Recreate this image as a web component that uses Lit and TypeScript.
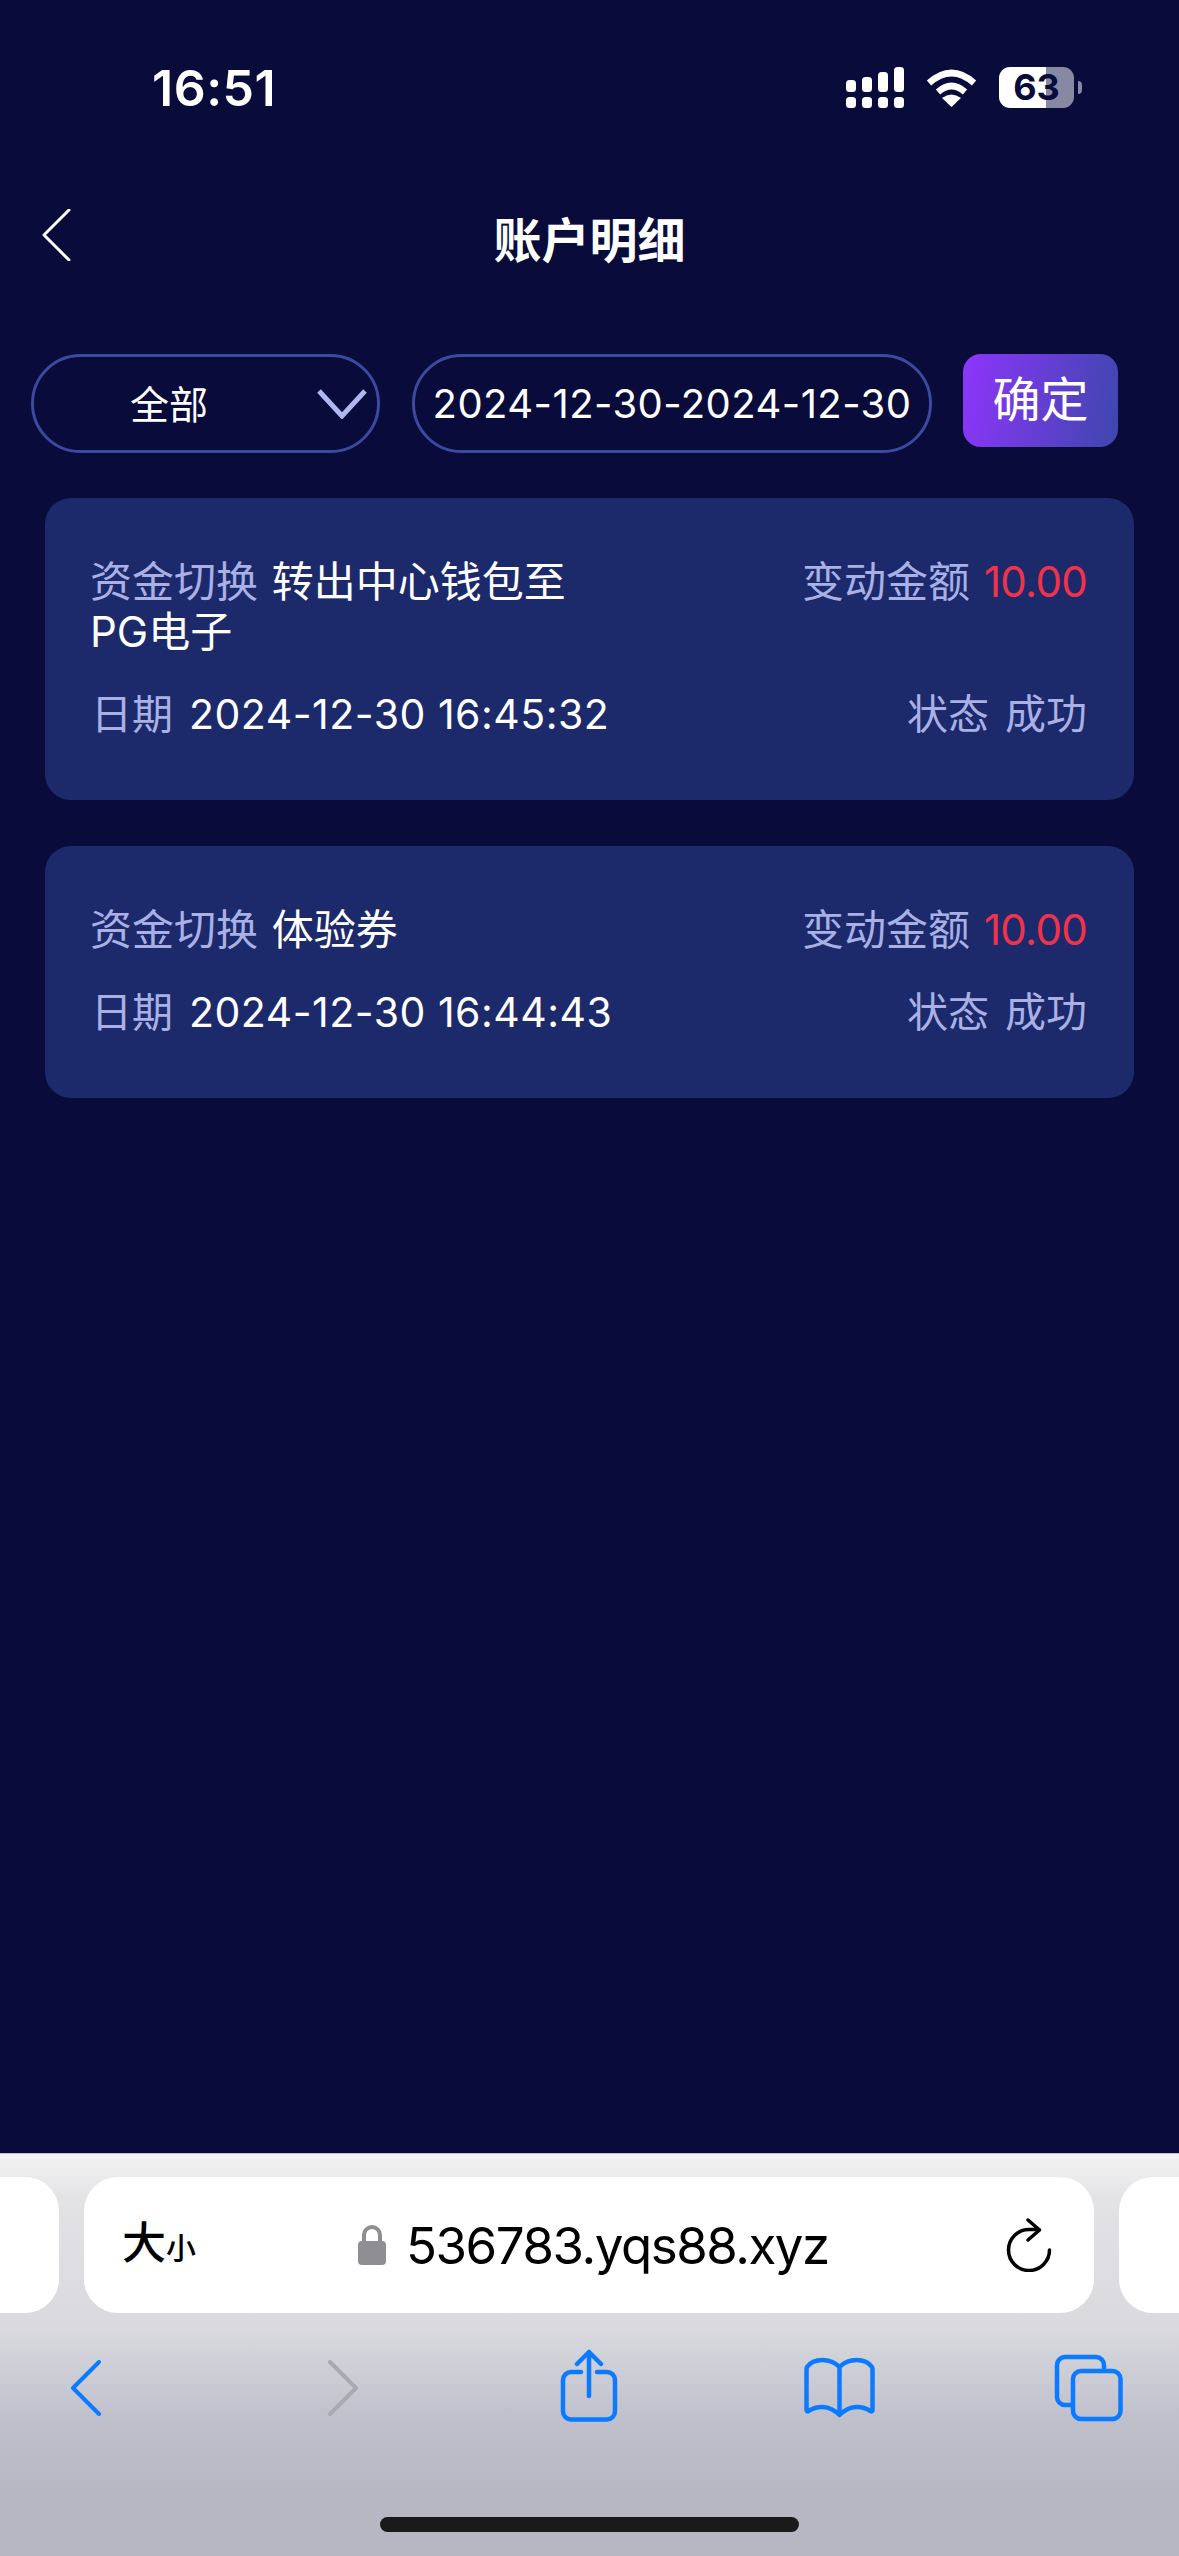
import { LitElement, html, css, svg } from "lit";
import { customElement } from "lit/decorators.js";

const records = [
  { title: "转出中心钱包至PG电子", date: "2024-12-30 16:45:32" },
  { title: "体验券", date: "2024-12-30 16:44:43" },
];

const backIcon = (color: string, w = 2.5) => svg`<path d="M27 1 2 26l25 25" fill="none" stroke=${color} stroke-width=${w} stroke-linecap="round" stroke-linejoin="round" />`;

@customElement("app-root")
export class AppRoot extends LitElement {
  static styles = css`
    :host {
      display: block;
      width: 1179px;
      height: 2556px;
      font-family: Inter, "Noto Sans CJK SC", sans-serif;
    }
    .page {
      display: flex;
      flex-direction: column;
      height: 2556px;
      background: #090b3b;
      color: #fff;
      overflow: hidden;
    }
    .status {
      display: flex;
      align-items: center;
      height: 67px;
      margin-top: 54px;
      padding: 0 105px 0 152px;
      justify-content: space-between;
    }
    .time {
      font-size: 50px;
      font-weight: 600;
      letter-spacing: 0.5px;
    }
    .status-icons {
      display: flex;
      align-items: center;
      gap: 22px;
    }
    .battery {
      position: relative;
      width: 75px;
      height: 41px;
      border-radius: 11px;
      background: linear-gradient(90deg, #fff 63%, #8789a3 63%);
      color: #090b3b;
      font-size: 36px;
      font-weight: 700;
      line-height: 41px;
      text-align: center;
    }
    .battery::after {
      content: "";
      position: absolute;
      right: -8px;
      top: 14px;
      width: 4px;
      height: 13px;
      border-radius: 0 6px 6px 0;
      background: #8789a3;
    }
    .nav {
      position: relative;
      display: flex;
      justify-content: center;
      align-items: center;
      height: 62px;
      margin-top: 88px;
    }
    .nav svg {
      position: absolute;
      left: 42px;
      top: 0;
    }
    .title {
      margin-top: 2px;
      font-size: 48px;
      font-weight: 700;
      line-height: 62px;
    }
    .filters {
      display: flex;
      align-items: flex-start;
      gap: 32px;
      margin: 83px 0 0 31px;
    }
    .pill {
      display: flex;
      align-items: center;
      box-sizing: border-box;
      height: 99px;
      border: 3px solid #3a4a9f;
      border-radius: 50px;
      font-size: 40px;
    }
    .select {
      position: relative;
      width: 349px;
      padding: 0 0 4px 96px;
      font-size: 39px;
    }
    .select svg {
      position: absolute;
      right: 10px;
      top: 32px;
    }
    .range {
      width: 520px;
      justify-content: center;
      white-space: nowrap;
      letter-spacing: 0.45px;
    }
    .ok {
      width: 155px;
      height: 93px;
      margin-left: -1px;
      border-radius: 18px;
      background: linear-gradient(100deg, #8e35fb, #3d47ad);
      font-size: 48px;
      line-height: 92px;
      text-align: center;
    }
    .list {
      display: flex;
      flex-direction: column;
      gap: 46px;
      margin: 45px 45px 0;
    }
    .card {
      padding: 59px 47px 61px 45px;
      border-radius: 26px;
      background: #1c2a6b;
      font-size: 42px;
      line-height: 50px;
      color: #a9b0e6;
    }
    .row {
      display: flex;
      justify-content: space-between;
      align-items: flex-start;
    }
    .row + .row {
      margin-top: 32px;
      padding-left: 1px;
      font-size: 41px;
    }
    .left {
      width: 490px;
    }
    .name {
      margin-left: 2px;
      color: #fff;
    }
    .pair {
      display: flex;
      gap: 16px;
    }
    .value {
      color: #fff;
      letter-spacing: 0.5px;
    }
    .red {
      color: #f0334a;
      letter-spacing: -0.7px;
      margin-left: -2px;
    }
    .chrome {
      position: relative;
      margin-top: auto;
      height: 403px;
      border-top: 1px solid #c4c4cc;
      box-sizing: border-box;
      background: linear-gradient(180deg, #f3f3f3 0, #e3e3e6 45px, #d9d9de 175px, #bfc0cc 265px, #b7b7c3 340px);
      color: #000;
    }
    .tabs {
      display: flex;
      gap: 25px;
      padding-top: 23px;
      margin-left: -951px;
    }
    .tab {
      flex: none;
      display: flex;
      align-items: center;
      width: 1010px;
      height: 136px;
      box-sizing: border-box;
      padding: 0 42px 0 38px;
      border-radius: 34px;
      background: #fff;
    }
    .size {
      width: 236px;
      font-weight: 500;
      font-size: 44px;
      line-height: 50px;
    }
    .size small {
      font-size: 30px;
    }
    .url {
      display: flex;
      align-items: center;
      gap: 20px;
      flex: 1;
      font-size: 51px;
      letter-spacing: -1.45px;
      white-space: nowrap;
    }
    .tools {
      display: flex;
      position: relative;
      height: 72px;
      margin-top: 36px;
    }
    .tools svg {
      position: absolute;
      top: 0;
    }
    .home {
      position: absolute;
      left: 380px;
      bottom: 24px;
      width: 419px;
      height: 15px;
      border-radius: 8px;
      background: #1a1a1a;
    }
  `;

  renderCard(r: { title: string; date: string }) {
    return html`<div class="card">
      <div class="row">
        <div class="left">资金切换 <span class="name">${r.title}</span></div>
        <div class="pair"><span>变动金额</span><span class="red">10.00</span></div>
      </div>
      <div class="row">
        <div class="pair"><span>日期</span><span class="value">${r.date}</span></div>
        <div class="pair"><span>状态</span><span>成功</span></div>
      </div>
    </div>`;
  }

  render() {
    return html`<div class="page">
      <div class="status">
        <div class="time">16:51</div>
        <div class="status-icons">
          <svg width="58" height="41" viewBox="0 0 58 41" fill="#fff">
            <rect x="0" y="13" width="10" height="12" rx="3.5" />
            <rect x="16" y="10" width="10" height="15" rx="3.5" />
            <rect x="32" y="5" width="10" height="20" rx="3.5" />
            <rect x="48" y="0" width="10" height="25" rx="3.5" />
            <rect x="0" y="30" width="10" height="11" rx="3.5" />
            <rect x="16" y="30" width="10" height="11" rx="3.5" />
            <rect x="32" y="30" width="10" height="11" rx="3.5" />
            <rect x="48" y="30" width="10" height="11" rx="3.5" />
          </svg>
          <svg width="51" height="38" viewBox="0 0 51 38">
            <path d="M3 14Q25.5-6 48 14M12 23Q25.5 11 39 23" fill="none" stroke="#fff" stroke-width="6.5" />
            <path d="M16 29Q25.500 22 35 29L25.500 38Z" fill="#fff" />
          </svg>
          <div class="battery">63</div>
        </div>
      </div>

      <div class="nav">
        <svg width="30" height="52" viewBox="0 0 30 52">${backIcon("#fff", 3)}</svg>
        <div class="title">账户明细</div>
      </div>

      <div class="filters">
        <div class="pill select">
          全部
          <svg width="50" height="30" viewBox="0 0 50 30">
            <path d="M2 2 25 27 48 2" fill="none" stroke="#b0b7ee" stroke-width="5" />
          </svg>
        </div>
        <div class="pill range">2024-12-30-2024-12-30</div>
        <div class="ok">确定</div>
      </div>

      <div class="list">${records.map((r) => this.renderCard(r))}</div>

      <div class="chrome">
        <div class="tabs">
          <div class="tab"></div>
          <div class="tab">
            <div class="size">大<small>小</small></div>
            <div class="url">
              <svg width="28" height="40" viewBox="0 0 28 40">
                <path d="M6 18V10a8 8 0 0 1 16 0v8" fill="none" stroke="#8e8e93" stroke-width="4" />
                <rect x="0" y="16" width="28" height="24" rx="4" fill="#8e8e93" />
              </svg>
              536783.yqs88.xyz
            </div>
            <svg width="46" height="54" viewBox="0 0 46 54" fill="none" stroke="#000" stroke-width="3.500" stroke-linecap="round" stroke-linejoin="round">
              <path d="M43.500 32A20.500 20.500 0 1 1 23 11.500H33" />
              <path d="M22 2 33.500 12 22 22" />
            </svg>
          </div>
          <div class="tab"></div>
        </div>
        <div class="tools">
          <svg style="left:70px;top:11px" width="32" height="56" viewBox="0 0 32 56">
            <path d="M29 2 3 28l26 26" fill="none" stroke="#0a7aff" stroke-width="4" stroke-linecap="round" stroke-linejoin="round" />
          </svg>
          <svg style="left:327px;top:11px" width="32" height="56" viewBox="0 0 32 56">
            <path d="M3 2l26 26L3 54" fill="none" stroke="#a9a9b0" stroke-width="4" stroke-linecap="round" stroke-linejoin="round" />
          </svg>
          <svg style="left:559px;top:0" width="60" height="74" viewBox="0 0 60 74" fill="none" stroke="#0a7aff" stroke-width="4.500" stroke-linecap="round" stroke-linejoin="round">
            <path d="M22 23H12a8 8 0 0 0-8 8v31.500a8 8 0 0 0 8 8h36a8 8 0 0 0 8-8V31a8 8 0 0 0-8-8H38" />
            <path d="M30 47V3M18 15 30 3l12 12" />
          </svg>
          <svg style="left:803px;top:8px" width="73" height="62" viewBox="0 0 72 62" fill="none" stroke="#0a7aff" stroke-width="4.500" stroke-linecap="round" stroke-linejoin="round">
            <path d="M36 10C31 5 26 3 19 3 12 3 7 5 3.500 10 3 11 3 12 3 13V53c0 1 1 2 2 1 8-5 20-7 31 4 11-11 23-9 31-4 1 1 2 0 2-1V13c0-1 0-2-.5-3C65 5 60 3 53 3c-7 0-12 2-17 7Z" />
            <path d="M36 10V57" />
          </svg>
          <svg style="left:1054px;top:0" width="70" height="74" viewBox="0 0 70 74" fill="none" stroke="#0a7aff" stroke-width="4.500" stroke-linejoin="round">
            <path d="M17 56h-6a8 8 0 0 1-8-8V16a8 8 0 0 1 8-8h31a8 8 0 0 1 8 8v5" />
            <rect x="19" y="22" width="47.500" height="48" rx="8" />
          </svg>
        </div>
        <div class="home"></div>
      </div>
    </div>`;
  }
}
